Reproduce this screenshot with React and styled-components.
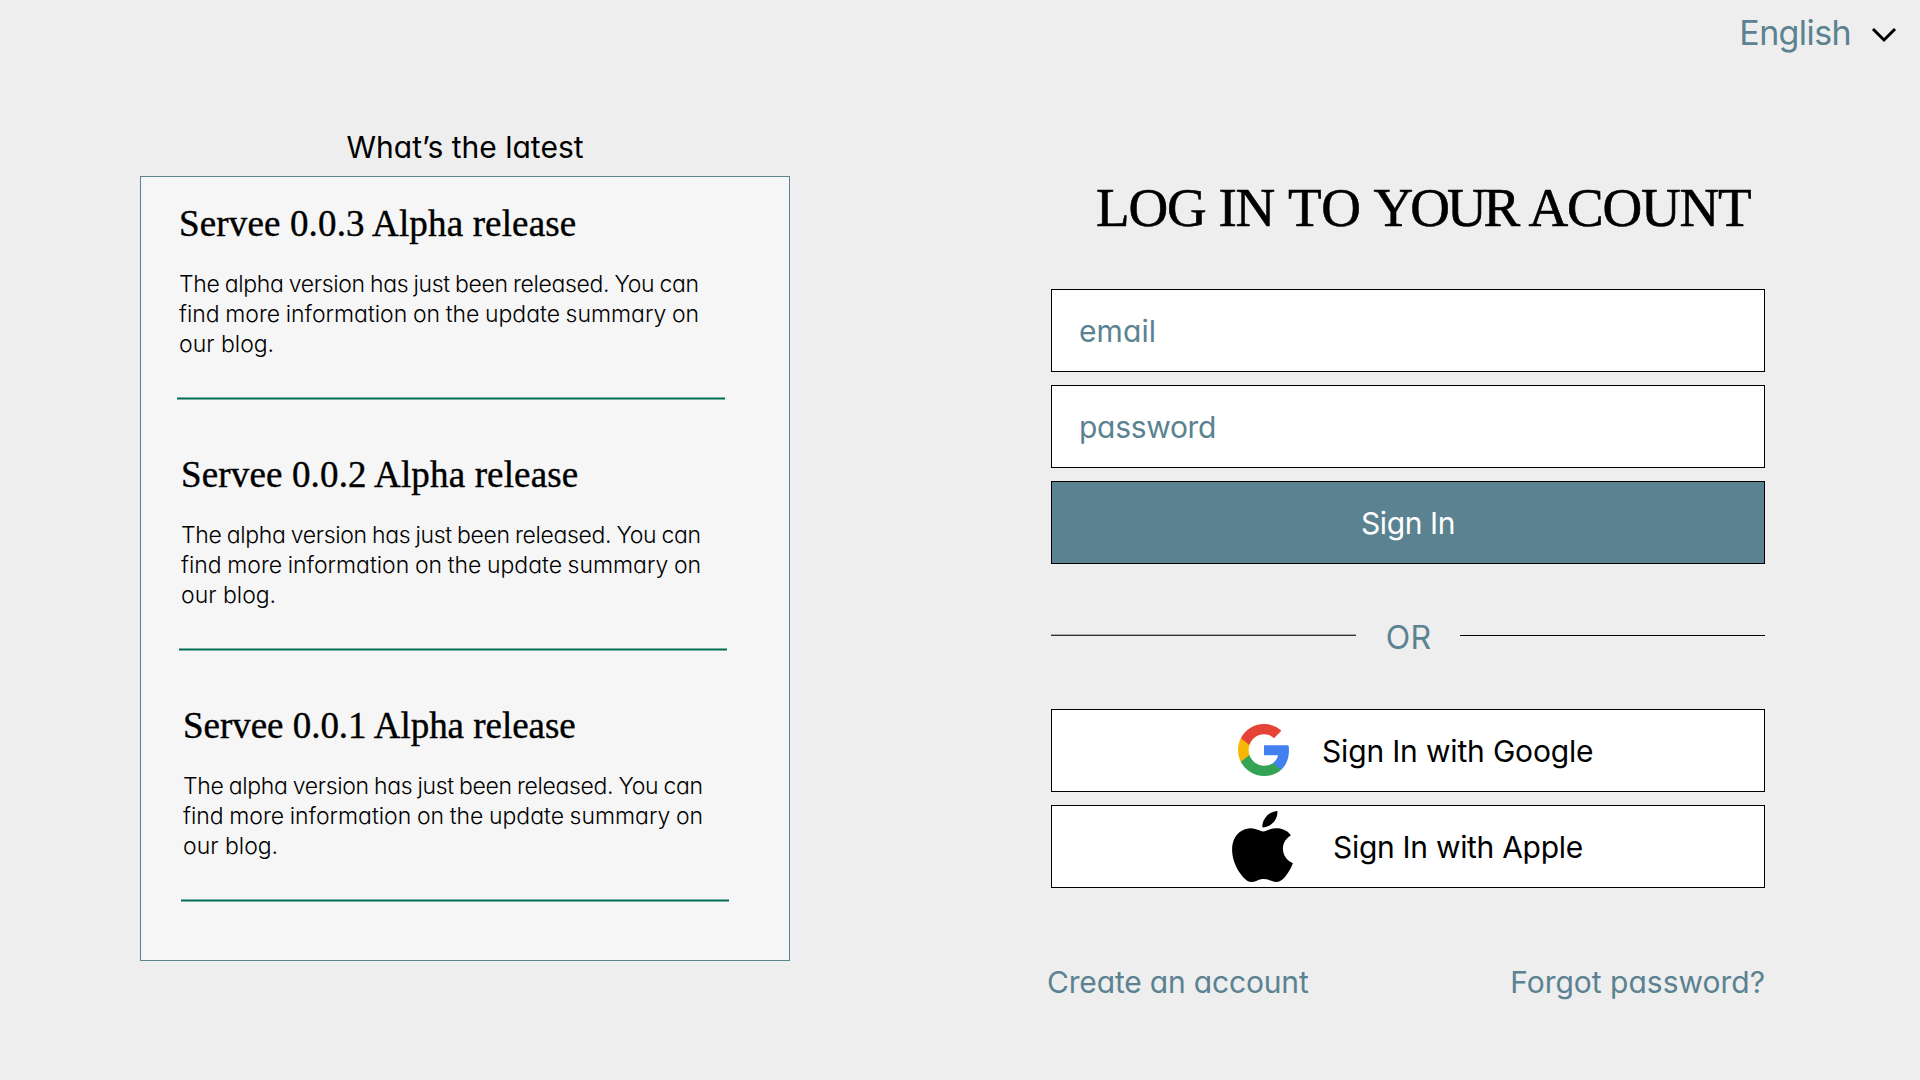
import styled, { createGlobalStyle } from 'styled-components';

const GlobalStyle = createGlobalStyle`
    *{
        box-sizing: border-box;
        margin: 0;
        padding: 0;
    }
    body{
        background-color: #eeeeee;
        color: #000;
        font-family: Inter, 'Liberation Sans', sans-serif;
        font-feature-settings: 'cv11';
    }
`

const PageStyled = styled.div`
    display: flex;
    flex-direction: column;
    height: 1080px;
    overflow: hidden;
    width: 1920px;
`

const TopBar = styled.header`
    display: flex;
    height: 65px;
    justify-content: flex-end;
    padding-right: 23px;
`

const LanguageBtn = styled.button`
    align-items: center;
    background: none;
    border: none;
    color: #5b8291;
    display: flex;
    font: inherit;
    font-feature-settings: inherit;
    font-size: 34px;
    gap: 20px;
    letter-spacing: -0.6px;
    svg{
        margin-top: 4px;
    }
`

const MainStyled = styled.main`
    display: flex;
    gap: 261px;
    padding-left: 140px;
`

const NewsColumn = styled.section`
    padding-top: 53px;
    width: 650px;
`

const NewsHeading = styled.h2`
    font-size: 30px;
    font-weight: 400;
    line-height: 58px;
    text-align: center;
`

const NewsPanel = styled.div`
    background-color: #f6f6f6;
    border: 1px solid #5b8291;
    height: 785px;
    padding-top: 25px;
`

const NewsItemStyled = styled.article`
    height: 251px;
    margin-left: ${props => props.$indent}px;
    width: 548px;
    h3{
        -webkit-text-stroke: 0.4px #000;
        font-family: 'Liberation Serif', serif;
        font-size: 37px;
        font-weight: 400;
        letter-spacing: ${props => props.$titleSpacing}px;
        line-height: 44px;
        padding-left: 2px;
    }
    hr{
        background-color: #006b54;
        border: solid #7ab1a5;
        border-width: 1px 0;
        height: 3px;
        margin-top: 38px;
    }
`

const NewsText = styled.p`
    font-size: 23px;
    font-weight: 300;
    line-height: 30px;
    margin-top: 23px;
    padding-left: 2px;
`

const TextLine = styled.span`
    display: block;
    letter-spacing: ${props => props.$spacing}px;
    white-space: nowrap;
    word-spacing: ${props => props.$wordSpacing}px;
`

const LoginColumn = styled.section`
    padding-top: 111px;
    width: 714px;
    h1{
        -webkit-text-stroke: 0.6px #000;
        font-family: 'Liberation Serif', serif;
        font-size: 55px;
        font-weight: 400;
        letter-spacing: -1.1px;
        line-height: 64px;
        margin-bottom: 49px;
        padding-left: 45px;
        white-space: nowrap;
    }
`

const HeadingWord = styled.span`
    letter-spacing: ${props => props.$spacing}px;
    margin: 0 ${props => props.$after}px 0 ${props => props.$before}px;
`

const BoxGroup = styled.div`
    display: flex;
    flex-direction: column;
    gap: 13px;
`

const Field = styled.input`
    background-color: #fff;
    border: 1px solid #000;
    font: inherit;
    font-feature-settings: inherit;
    font-size: 30px;
    height: 83px;
    letter-spacing: ${props => props.$spacing}px;
    padding-left: 27px;
    width: 100%;
    &::placeholder{
        color: #5b8291;
        opacity: 1;
    }
`

const SignInBtn = styled.button`
    background-color: #5b8291;
    border: 1px solid #000;
    color: #fff;
    font: inherit;
    font-feature-settings: inherit;
    font-size: 30px;
    height: 83px;
    letter-spacing: -0.4px;
`

const OrRow = styled.div`
    align-items: center;
    display: flex;
    height: 33px;
    margin: 55px 0 57px;
    span{
        color: #5b8291;
        font-size: 32px;
        letter-spacing: 0.3px;
        line-height: 33px;
        padding: 3px 0 0 1px;
        text-align: center;
        width: 104px;
    }
`

const OrLine = styled.div`
    background-color: ${props => props.$soft ? '#333' : '#000'};
    border-top: ${props => props.$soft ? '1px solid #aaa' : 'none'};
    height: ${props => props.$soft ? 2 : 1}px;
    margin-top: ${props => props.$soft ? -1 : 0}px;
    width: 305px;
`

const SocialBtn = styled.button`
    align-items: center;
    background-color: #fff;
    border: 1px solid #000;
    color: #000;
    display: flex;
    font: inherit;
    font-feature-settings: inherit;
    font-size: 30px;
    gap: ${props => props.$gap}px;
    height: 83px;
    letter-spacing: ${props => props.$spacing}px;
    padding-left: ${props => props.$start}px;
`

const LinksRow = styled.nav`
    display: flex;
    font-size: 30px;
    justify-content: space-between;
    line-height: 36px;
    margin: 76px 0 0 -4px;
    a{
        color: #5b8291;
        text-decoration: none;
    }
`

const CreateLink = styled.a`
    letter-spacing: -0.17px;
`

const text = [
    { txt: 'The alpha version has just been released. You can', spacing: -0.35, wordSpacing: -0.8 },
    { txt: 'find more information on the update summary on', spacing: -0.02, wordSpacing: -0.8 },
    { txt: 'our blog.', spacing: 0, wordSpacing: 0 },
]

const news = [
    { title: 'Servee 0.0.3 Alpha release', indent: 36, spacing: 0.15 },
    { title: 'Servee 0.0.2 Alpha release', indent: 38, spacing: 0.15 },
    { title: 'Servee 0.0.1 Alpha release', indent: 40, spacing: -0.03 },
]

function ChevronIcon(){
    return(
        <svg width='26' height='16' viewBox='0 0 26 16' fill='none' stroke='#000' strokeWidth='3'>
            <path d='M2 2 L13 13 L24 2' />
        </svg>
    )
}

function GoogleIcon(){
    return(
        <svg width='51' height='53' viewBox='1 1 21.56 22.42'>
            <path fill='#4280ef' d='M22.56 12.25c0-.78-.07-1.53-.2-2.25H12v4.26h5.92c-.26 1.37-1.04 2.53-2.21 3.31v2.77h3.57c2.08-1.92 3.28-4.74 3.28-8.09z' />
            <path fill='#34a353' d='M12 23c2.97 0 5.46-.98 7.28-2.66l-3.57-2.77c-.98.66-2.23 1.06-3.71 1.06-2.86 0-5.29-1.93-6.16-4.53H2.18v2.84C3.99 20.53 7.7 23 12 23z' />
            <path fill='#f6b704' d='M5.84 14.09c-.22-.66-.35-1.36-.35-2.09s.13-1.43.35-2.09V7.07H2.18C1.43 8.55 1 10.22 1 12s.43 3.45 1.18 4.93l2.85-2.22.81-.62z' />
            <path fill='#e54335' d='M12 5.38c1.62 0 3.06.56 4.21 1.64l3.15-3.15C17.45 2.09 14.97 1 12 1 7.7 1 3.99 3.47 2.18 7.07l3.66 2.84c.87-2.6 3.3-4.53 6.16-4.53z' />
        </svg>
    )
}

function AppleIcon(){
    return(
        <svg width='61' height='71' viewBox='2.2 0 19.6 24' preserveAspectRatio='none'>
            <path d='M12.152 6.896c-.948 0-2.415-1.078-3.96-1.04-2.04.027-3.91 1.183-4.961 3.014-2.117 3.675-.546 9.103 1.519 12.09 1.013 1.454 2.208 3.09 3.792 3.039 1.52-.065 2.09-.987 3.935-.987 1.831 0 2.35.987 3.96.948 1.637-.026 2.676-1.48 3.676-2.948 1.156-1.688 1.636-3.325 1.662-3.415-.039-.013-3.182-1.221-3.22-4.857-.026-3.04 2.48-4.494 2.597-4.559-1.429-2.09-3.623-2.324-4.39-2.376-2-.156-3.675 1.09-4.61 1.09zM15.53 3.83c.843-1.012 1.4-2.427 1.245-3.83-1.207.052-2.662.805-3.532 1.818-.78.896-1.454 2.338-1.273 3.714 1.338.104 2.715-.688 3.559-1.701' />
        </svg>
    )
}

function NewsItem({ item }){
    return(
        <NewsItemStyled $indent={item.indent} $titleSpacing={item.spacing}>
            <h3>{item.title}</h3>
            <NewsText>
                {text.map(line => (
                    <TextLine key={line.txt} $spacing={line.spacing} $wordSpacing={line.wordSpacing}>
                        {line.txt}
                    </TextLine>
                ))}
            </NewsText>
            <hr />
        </NewsItemStyled>
    )
}

export default function App(){
    return(
        <PageStyled>
            <GlobalStyle />
            <TopBar>
                <LanguageBtn>
                    English
                    <ChevronIcon />
                </LanguageBtn>
            </TopBar>
            <MainStyled>
                <NewsColumn>
                    <NewsHeading>What’s the latest</NewsHeading>
                    <NewsPanel>
                        {news.map(item => <NewsItem key={item.title} item={item} />)}
                    </NewsPanel>
                </NewsColumn>
                <LoginColumn>
                    <h1>
                        LOG IN <HeadingWord $spacing={0.8} $before={1} $after={0}>TO</HeadingWord> <HeadingWord $spacing={-3} $before={-1} $after={-1.5}>YOUR</HeadingWord> <HeadingWord $spacing={-1.2} $before={0} $after={0}>ACOUNT</HeadingWord>
                    </h1>
                    <BoxGroup>
                        <Field type='email' placeholder='email' $spacing={0.1} />
                        <Field type='password' placeholder='password' $spacing={-0.3} />
                        <SignInBtn>Sign In</SignInBtn>
                    </BoxGroup>
                    <OrRow>
                        <OrLine $soft />
                        <span>OR</span>
                        <OrLine />
                    </OrRow>
                    <BoxGroup>
                        <SocialBtn $start={186} $gap={33} $spacing={-0.17}>
                            <GoogleIcon />
                            Sign In with Google
                        </SocialBtn>
                        <SocialBtn $start={180} $gap={40} $spacing={-0.3}>
                            <AppleIcon />
                            Sign In with Apple
                        </SocialBtn>
                    </BoxGroup>
                    <LinksRow>
                        <CreateLink href='#'>Create an account</CreateLink>
                        <a href='#'>Forgot password?</a>
                    </LinksRow>
                </LoginColumn>
            </MainStyled>
        </PageStyled>
    )
}
